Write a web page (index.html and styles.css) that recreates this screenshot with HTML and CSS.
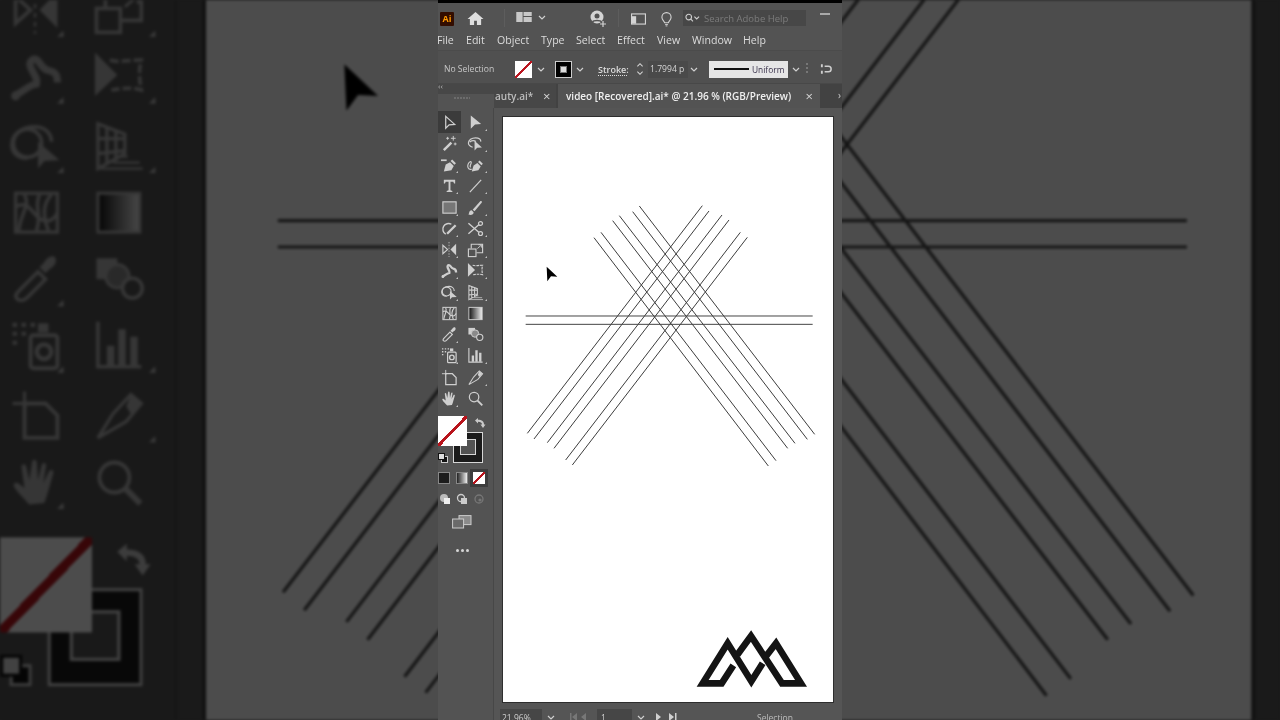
FILE: index.html
```html
<!DOCTYPE html>
<html lang="en">
<head>
<meta charset="utf-8">
<title>Illustrator</title>
<link rel="stylesheet" href="styles.css">
</head>
<body>
<svg class="sprite" aria-hidden="true">
  <defs>
    <linearGradient id="grad"><stop offset="0" stop-color="#111"/><stop offset="1" stop-color="#eee"/></linearGradient>
    <symbol id="sel" viewBox="0 0 18 18"><path d="M5 2.500V15l3.600-3.600 5.900-.4z" fill="none" stroke="currentColor" stroke-width="1.300"/></symbol>
    <symbol id="direct" viewBox="0 0 18 18"><path d="M4 1.500v14l4.500-4.500 6.500-.5z" fill="currentColor"/></symbol>
    <symbol id="wand" viewBox="0 0 18 18"><path d="M3 16l8-8" stroke="currentColor" stroke-width="2.600" fill="none"/><path d="M13 1v5M10.500 3.500h5M7 2v3M5.500 3.500h3M15 8v3M13.500 9.500h3" stroke="currentColor" fill="none"/></symbol>
    <symbol id="lasso" viewBox="0 0 18 18"><path d="M6 13C3 12 1.500 10.500 1.500 8.500 1.500 5.500 5 3 9 3s6 2 5.500 4M3 7.500c2-1.500 5-1.500 6.500-.5" fill="none" stroke="currentColor" stroke-width="1.300"/><path d="M8 6v10.500l2.800-3 5-.3z" fill="currentColor"/></symbol>
    <symbol id="pen" viewBox="0 0 18 18"><path d="M3 16.500l2-7.500 4.500-2.500 4 4-2.500 4.500z" fill="currentColor"/><path d="M11 4.500l4 4" stroke="currentColor" stroke-width="2.400"/><path d="M0 4.500h6" stroke="currentColor" stroke-width="1.800"/></symbol>
    <symbol id="curv" viewBox="0 0 18 18"><path d="M5 16.500l2-6.500 4-2.500 3.500 3.500-2.500 4z" fill="currentColor"/><path d="M12.500 5.500l3.500 3.500" stroke="currentColor" stroke-width="2.200"/><path d="M5 14C1 15 0 11 1.500 8c1-2 3-3 3-1S2 11 4 12" fill="none" stroke="currentColor" stroke-width="1.200"/></symbol>
    <symbol id="type" viewBox="0 0 18 18"><path d="M3 3h12v4h-1.200l-.8-2h-3v9l2 .7V16H6v-1.300l2-.7V5H5L4.200 7H3z" fill="currentColor"/></symbol>
    <symbol id="line" viewBox="0 0 18 18"><path d="M3 16L15 3" stroke="currentColor" stroke-width="1.300"/></symbol>
    <symbol id="rect" viewBox="0 0 18 18"><rect x="2" y="3" width="14" height="12" fill="#767676" stroke="currentColor" stroke-width="1.200"/></symbol>
    <symbol id="brush" viewBox="0 0 18 18"><path d="M1.500 16.500c1-1 .5-4.500 3.500-4.500l2 2c0 2.500-2.500 3.500-5.500 2.500z" fill="currentColor"/><path d="M6 11.500L14 2.500c1-1 2.500 0 1.500 1.500L8 13z" fill="currentColor"/></symbol>
    <symbol id="shaper" viewBox="0 0 18 18"><path d="M11 4.500A5.800 5.800 0 1 0 5 15" fill="none" stroke="currentColor" stroke-width="1.500"/><path d="M6.500 14.500L15.500 5.500" stroke="currentColor" stroke-width="2.400"/></symbol>
    <symbol id="scissors" viewBox="0 0 18 18"><path d="M1.500 3.500L12.500 13M1.500 14.500L12.500 5" stroke="currentColor" stroke-width="1.500" fill="none"/><circle cx="14.300" cy="3.700" r="2.100" fill="none" stroke="currentColor" stroke-width="1.300"/><circle cx="14.300" cy="14.300" r="2.100" fill="none" stroke="currentColor" stroke-width="1.300"/></symbol>
    <symbol id="reflect" viewBox="0 0 18 18"><path d="M2 4.500v9l5-4.500z" fill="none" stroke="currentColor" stroke-width="1.200"/><path d="M16 3v12l-6-6z" fill="currentColor"/><path d="M8.500 1v16" stroke="currentColor" stroke-dasharray="1.500 1.500" stroke-width=".8"/></symbol>
    <symbol id="scale" viewBox="0 0 18 18"><rect x="1.500" y="8.500" width="8" height="8" fill="none" stroke="currentColor" stroke-width="1.200"/><path d="M4.500 8V3.500h12v9H10" fill="none" stroke="currentColor" stroke-width="1.200"/><path d="M11 8l4-3.500M12 4h3.500v3" stroke="currentColor" fill="none"/></symbol>
    <symbol id="warp" viewBox="0 0 18 18"><path d="M1.500 15.500C5 14 6 12 9 11.500 10 9 5 5.500 7.500 3.500 10 2 10 6.500 13 7c3 .5 3 2.500 3 4" fill="none" stroke="currentColor" stroke-width="2.400"/><circle cx="2" cy="15.500" r="1.500" fill="currentColor"/></symbol>
    <symbol id="free" viewBox="0 0 18 18"><path d="M1 1v14.500l7.500-7z" fill="currentColor"/><path d="M6 3.500c3 1 5 0 10.500 0-.8 3-.8 6 0 10-4-1-6-.5-10 0" fill="none" stroke="currentColor" stroke-width="1.200" stroke-dasharray="3 1"/></symbol>
    <symbol id="builder" viewBox="0 0 18 18"><circle cx="6" cy="8" r="4.700" fill="none" stroke="currentColor" stroke-width="1.200"/><path d="M6 13C2 13 .5 10.500.8 8 1 5 4 2.500 8.500 2.500c3 0 5.500 2 5.500 5" fill="none" stroke="currentColor" stroke-width="1.200"/><path d="M9.500 7.500v9l2.200-2.500 5-.3z" fill="currentColor"/></symbol>
    <symbol id="persp" viewBox="0 0 18 18"><path d="M2 1.500L11 5v6.500L2 16.500zM5 2.500v12.500M8 4v10M2 6.500h9M2 11.500l9-1" fill="none" stroke="currentColor" stroke-width="1.100"/><path d="M9 12.500h3M7 14.500h9M3 16.500h14" stroke="currentColor" stroke-width=".8"/></symbol>
    <symbol id="mesh" viewBox="0 0 18 18"><rect x="2" y="2.500" width="14" height="13" fill="none" stroke="currentColor" stroke-width="1.100"/><path d="M2 7c4-2 5 1 7 3s5 3 7-1M5 3c2 4-1 5-2 12M10 3C8 7 11 9 9 15M14 3c-3 3-3 7-1 12" fill="none" stroke="currentColor" stroke-width="1.200"/></symbol>
    <symbol id="gradtool" viewBox="0 0 18 18"><rect x="2" y="2.500" width="14" height="13" fill="url(#grad)" stroke="currentColor"/></symbol>
    <symbol id="dropper" viewBox="0 0 18 18"><path d="M2.500 15.500c-1-1 0-2 1-3l6-6 2.500 2.500-6 6c-1 1-2.500 1.500-3.500.5z" fill="none" stroke="currentColor" stroke-width="1.200"/><path d="M10 5l1.500-1.500c1-2 3-2.500 3.500-2 1 1 .5 3-1.500 4L12 7z" fill="currentColor"/></symbol>
    <symbol id="blend" viewBox="0 0 18 18"><rect x="1.500" y="2" width="7" height="7" fill="currentColor"/><circle cx="8.500" cy="8" r="3.900" fill="#8a8a8a" stroke="currentColor"/><circle cx="13.500" cy="12" r="3.300" fill="#535353" stroke="currentColor" stroke-width="1.200"/></symbol>
    <symbol id="spray" viewBox="0 0 18 18"><path d="M1 2h1.500M4 2h1.500M7 2h1.500M1 5h1.500M4 5h1.500M1 8h1.500" stroke="currentColor" stroke-width="1.400"/><rect x="9.500" y="1.500" width="3.500" height="3" fill="currentColor"/><rect x="7" y="5.500" width="9" height="11" rx="1" fill="none" stroke="currentColor" stroke-width="1.300"/><circle cx="11.500" cy="11" r="2.400" fill="none" stroke="currentColor" stroke-width="1.500"/></symbol>
    <symbol id="graph" viewBox="0 0 18 18"><path d="M2 1v15h14.500" fill="none" stroke="currentColor" stroke-width="1.200"/><path d="M5 9h2.500v6.500H5zM8.800 3.500h2.500v12H8.800zM12.800 6h2.500v9.500h-2.500z" fill="currentColor"/></symbol>
    <symbol id="artboard" viewBox="0 0 18 18"><path d="M5 1v5M1 5h5" stroke="currentColor"/><path d="M5 5h7l4 4v7.500H5z" fill="none" stroke="currentColor" stroke-width="1.300"/></symbol>
    <symbol id="slice" viewBox="0 0 18 18"><path d="M2 16.500L7 8.500l6-6.500 3.500 3-5 6z" fill="none" stroke="currentColor" stroke-width="1.100"/><path d="M11.500 6l1.500-4 3.500 3-3.500 3.500z" fill="currentColor"/></symbol>
    <symbol id="hand" viewBox="0 0 18 18"><path d="M6.500 16.500c-1.500-2-4-4-5-6-.5-1 .8-1.800 1.700-.8L5 11 4 4c0-1.200 1.400-1.200 1.600 0l1 4.500L7.500 2.500c0-1.200 1.500-1.200 1.600 0l.4 6 1.200-5c.3-1.200 1.700-1 1.500.2l-1 5.800 2-4c.5-1 1.800-.5 1.400.6-1 3.400-1.800 6.900-3 9.900z" fill="currentColor"/></symbol>
    <symbol id="zoomtool" viewBox="0 0 18 18"><circle cx="7.500" cy="7.500" r="5" fill="none" stroke="currentColor" stroke-width="1.300"/><path d="M11.200 11.200l5 5" stroke="currentColor" stroke-width="2"/></symbol>
    <symbol id="artwork" viewBox="0 0 330 585">
      <g transform="translate(17 83) scale(.33333)" fill="none" stroke="#3c3c3c" stroke-width="3">
        <path d="M358 18L884 703M338 35L862 718M298 47L825 730M278 62L803 745M243 97L768 782M222 113L745 798"/>
        <path d="M547 17L22 700M567 33L42 717M606 45L82 728M627 60L102 745M661 97L137 780M682 112L157 795"/>
        <path d="M17 348H878M17 373H878" stroke="#444"/>
        <path d="M80 200L112 230L93 229L82 244z" fill="#000" stroke="none"/>
      </g>
      <g transform="translate(177 503) scale(.33333)" fill="none" stroke="#141414" stroke-width="20">
        <path d="M160 136L125 190H68L143 70 214 184 248 130"/>
        <path d="M172 104L213 48 306 190H363L288 70 254 114"/>
      </g>
    </symbol>
  </defs>
</svg>

<div class="backdrop" aria-hidden="true">
  <div class="stage">
    <div class="workspace">
      <div class="toolbox">
        <div class="tools">
          <span class="tool on"><svg><use href="#sel"/></svg></span><span class="tool more"><svg><use href="#direct"/></svg></span>
          <span class="tool"><svg><use href="#wand"/></svg></span><span class="tool more"><svg><use href="#lasso"/></svg></span>
          <span class="tool more"><svg><use href="#pen"/></svg></span><span class="tool more"><svg><use href="#curv"/></svg></span>
          <span class="tool more"><svg><use href="#type"/></svg></span><span class="tool more"><svg><use href="#line"/></svg></span>
          <span class="tool more"><svg><use href="#rect"/></svg></span><span class="tool more"><svg><use href="#brush"/></svg></span>
          <span class="tool more"><svg><use href="#shaper"/></svg></span><span class="tool more"><svg><use href="#scissors"/></svg></span>
          <span class="tool more"><svg><use href="#reflect"/></svg></span><span class="tool more"><svg><use href="#scale"/></svg></span>
          <span class="tool more"><svg><use href="#warp"/></svg></span><span class="tool more"><svg><use href="#free"/></svg></span>
          <span class="tool more"><svg><use href="#builder"/></svg></span><span class="tool more"><svg><use href="#persp"/></svg></span>
          <span class="tool"><svg><use href="#mesh"/></svg></span><span class="tool"><svg><use href="#gradtool"/></svg></span>
          <span class="tool more"><svg><use href="#dropper"/></svg></span><span class="tool"><svg><use href="#blend"/></svg></span>
          <span class="tool more"><svg><use href="#spray"/></svg></span><span class="tool more"><svg><use href="#graph"/></svg></span>
          <span class="tool"><svg><use href="#artboard"/></svg></span><span class="tool more"><svg><use href="#slice"/></svg></span>
          <span class="tool more"><svg><use href="#hand"/></svg></span><span class="tool"><svg><use href="#zoomtool"/></svg></span>
        </div>
        <div class="swatches">
          <span class="stroke-big"><span class="stroke-inner"></span></span>
          <span class="fill-big"></span>
          <svg class="swap" viewBox="0 0 12 12"><path d="M1 3.500L4 1v1.800c4 0 6 1.700 6 4.700h1.500L9 11 6.500 7.500H8c0-1.800-1.500-2.700-4-2.700V6.500z" fill="currentColor"/></svg>
          <svg class="defaults" viewBox="0 0 10 10"><rect x="3.500" y="3.500" width="6" height="6" fill="#111" stroke="#ccc"/><rect x=".5" y=".5" width="6" height="6" fill="#ddd" stroke="#111"/></svg>
        </div>
      </div>
      <div class="canvas">
        <div class="artboard"><svg class="art"><use href="#artwork"/></svg></div>
      </div>
    </div>
  </div>
</div>

<div class="app">
  <div class="titlebar">
    <span class="ai-logo">Ai</span>
    <svg class="ic home" viewBox="0 0 18 16"><path d="M9 1L0.500 8.500H3V15h4.500v-4.500h3V15H15V8.500h2.500z" fill="currentColor"/></svg>
    <i class="sep sep-a"></i>
    <svg class="ic layout" viewBox="0 0 17 11"><path d="M0 0h7v11H0zM8 0h9v4.500H8zM8 5.500h9V11H8z" fill="currentColor"/></svg>
    <svg class="chev chev-a" viewBox="0 0 8 5"><path d="M1 1l3 3 3-3" fill="none" stroke="currentColor" stroke-width="1.200"/></svg>
    <svg class="ic user" viewBox="0 0 18 18"><circle cx="8" cy="7" r="6.500" fill="currentColor"/><circle cx="8" cy="6" r="2.500" fill="#535353"/><path d="M3.500 12c1-2 8-2 9 0" stroke="#535353" fill="none" stroke-width="1.500"/><path d="M14 11v6M11 14h6" stroke="currentColor" stroke-width="1.200"/></svg>
    <i class="sep sep-b"></i>
    <svg class="ic panel" viewBox="0 0 16 12"><rect x=".6" y=".6" width="14.800" height="10.800" fill="none" stroke="currentColor" stroke-width="1.200"/><rect x="1" y="3" width="4.500" height="8" fill="currentColor"/></svg>
    <svg class="ic bulb" viewBox="0 0 12 16"><path d="M4 11.500C3 9 1 8.500 1 5.500a5 5 0 0 1 10 0c0 3-2 3.500-3 6z" fill="none" stroke="currentColor" stroke-width="1.200"/><path d="M4.500 13.500h3M5 15h2" stroke="currentColor"/></svg>
    <div class="search">
      <svg class="search-ic" viewBox="0 0 16 10"><circle cx="4" cy="4" r="3" fill="none" stroke="currentColor" stroke-width="1.200"/><path d="M6 6l2.500 2.500M10 3.500l2.500 2.500 2.500-2.500" fill="none" stroke="currentColor" stroke-width="1.200"/></svg>
      <span>Search Adobe Help</span>
    </div>
    <i class="minimize"></i>
  </div>

  <nav class="menubar">
    <span>File</span><span>Edit</span><span>Object</span><span>Type</span><span>Select</span><span>Effect</span><span>View</span><span>Window</span><span>Help</span>
  </nav>

  <div class="controlbar">
    <span class="no-sel">No Selection</span>
    <span class="ctl-fill"></span>
    <svg class="chev chev-b" viewBox="0 0 8 5"><path d="M1 1l3 3 3-3" fill="none" stroke="currentColor" stroke-width="1.200"/></svg>
    <span class="ctl-stroke"><i></i></span>
    <svg class="chev chev-c" viewBox="0 0 8 5"><path d="M1 1l3 3 3-3" fill="none" stroke="currentColor" stroke-width="1.200"/></svg>
    <span class="stroke-label">Stroke:</span>
    <svg class="stepper" viewBox="0 0 8 16"><path d="M1 5l3-3 3 3M1 11l3 3 3-3" fill="none" stroke="currentColor" stroke-width="1.200"/></svg>
    <span class="stroke-val">1.7994 p</span>
    <svg class="chev chev-d" viewBox="0 0 8 5"><path d="M1 1l3 3 3-3" fill="none" stroke="currentColor" stroke-width="1.200"/></svg>
    <span class="uniform"><i></i><b>Uniform</b></span>
    <svg class="chev chev-e" viewBox="0 0 8 5"><path d="M1 1l3 3 3-3" fill="none" stroke="currentColor" stroke-width="1.200"/></svg>
    <i class="grip"></i>
    <svg class="ic align" viewBox="0 0 14 12"><path d="M1 1h2v3H1zM1 8h2v3H1z" fill="currentColor"/><path d="M5 3h4a3 3 0 0 1 0 6H5" fill="none" stroke="currentColor" stroke-width="1.600"/></svg>
  </div>

  <div class="tabrow">
    <div class="panel-head"><span class="collapse">‹‹</span><i class="grab"></i></div>
    <div class="tab tab-off"><span class="tab-clip">auty.ai*</span><span class="x">×</span></div>
    <div class="tab tab-on"><span>video [Recovered].ai* @ 21.96 % (RGB/Preview)</span><span class="x">×</span></div>
    <div class="tab-rest">›</div>
  </div>

  <div class="workspace">
    <div class="toolbox">
      <div class="tools">
        <span class="tool on"><svg><use href="#sel"/></svg></span><span class="tool more"><svg><use href="#direct"/></svg></span>
        <span class="tool"><svg><use href="#wand"/></svg></span><span class="tool more"><svg><use href="#lasso"/></svg></span>
        <span class="tool more"><svg><use href="#pen"/></svg></span><span class="tool more"><svg><use href="#curv"/></svg></span>
        <span class="tool more"><svg><use href="#type"/></svg></span><span class="tool more"><svg><use href="#line"/></svg></span>
        <span class="tool more"><svg><use href="#rect"/></svg></span><span class="tool more"><svg><use href="#brush"/></svg></span>
        <span class="tool more"><svg><use href="#shaper"/></svg></span><span class="tool more"><svg><use href="#scissors"/></svg></span>
        <span class="tool more"><svg><use href="#reflect"/></svg></span><span class="tool more"><svg><use href="#scale"/></svg></span>
        <span class="tool more"><svg><use href="#warp"/></svg></span><span class="tool more"><svg><use href="#free"/></svg></span>
        <span class="tool more"><svg><use href="#builder"/></svg></span><span class="tool more"><svg><use href="#persp"/></svg></span>
        <span class="tool"><svg><use href="#mesh"/></svg></span><span class="tool"><svg><use href="#gradtool"/></svg></span>
        <span class="tool more"><svg><use href="#dropper"/></svg></span><span class="tool"><svg><use href="#blend"/></svg></span>
        <span class="tool more"><svg><use href="#spray"/></svg></span><span class="tool more"><svg><use href="#graph"/></svg></span>
        <span class="tool"><svg><use href="#artboard"/></svg></span><span class="tool more"><svg><use href="#slice"/></svg></span>
        <span class="tool more"><svg><use href="#hand"/></svg></span><span class="tool"><svg><use href="#zoomtool"/></svg></span>
      </div>
      <div class="swatches">
        <span class="stroke-big"><span class="stroke-inner"></span></span>
        <span class="fill-big"></span>
        <svg class="swap" viewBox="0 0 12 12"><path d="M1 3.500L4 1v1.800c4 0 6 1.700 6 4.700h1.500L9 11 6.500 7.500H8c0-1.800-1.500-2.700-4-2.700V6.500z" fill="currentColor"/></svg>
        <svg class="defaults" viewBox="0 0 10 10"><rect x="3.500" y="3.500" width="6" height="6" fill="#111" stroke="#ccc"/><rect x=".5" y=".5" width="6" height="6" fill="#ddd" stroke="#111"/></svg>
      </div>
      <div class="mode-row">
        <span class="mode mode-solid"></span><span class="mode mode-grad"></span><span class="mode-on"><span class="mode mode-none"></span></span>
      </div>
      <div class="draw-row">
        <svg class="draw on" viewBox="0 0 12 12"><circle cx="5" cy="5" r="4" fill="#bbb"/><rect x="5" y="5" width="6" height="6" fill="#eee"/></svg>
        <svg class="draw" viewBox="0 0 12 12"><circle cx="5" cy="5" r="3.500" fill="none" stroke="#ccc" stroke-width="1.300"/><rect x="5" y="5" width="6" height="6" fill="#ccc"/></svg>
        <svg class="draw dim" viewBox="0 0 12 12"><circle cx="6" cy="6" r="4" fill="none" stroke="#777" stroke-width="1.300"/><circle cx="7" cy="7" r="1.600" fill="#777"/></svg>
      </div>
      <svg class="screen" viewBox="0 0 20 14"><rect x="7" y=".6" width="12" height="9" fill="#8a8a8a" stroke="#ccc"/><rect x=".6" y="4" width="11" height="9" fill="#6a6a6a" stroke="#ccc"/></svg>
      <div class="dots"><i></i><i></i><i></i></div>
    </div>
    <div class="canvas">
      <div class="artboard"><svg class="art"><use href="#artwork"/></svg></div>
      <div class="status">
        <span class="zoom-val">21.96%</span>
        <svg class="chev" viewBox="0 0 8 5"><path d="M1 1l3 3 3-3" fill="none" stroke="currentColor" stroke-width="1.200"/></svg>
        <svg class="nav dim" viewBox="0 0 20 8"><path d="M1 0v8h1.500V0zM8 0L3 4l5 4zM17 0l-5 4 5 4z" fill="currentColor"/></svg>
        <span class="page-val">1</span>
        <svg class="chev" viewBox="0 0 8 5"><path d="M1 1l3 3 3-3" fill="none" stroke="currentColor" stroke-width="1.200"/></svg>
        <svg class="nav" viewBox="0 0 24 8"><path d="M2 0l5 4-5 4zM15 0l5 4-5 4zM21 0v8h1.500V0z" fill="currentColor"/></svg>
        <span class="status-label">Selection</span>
      </div>
    </div>
  </div>
</div>
</body>
</html>
```

FILE: styles.css
```css
* { box-sizing: border-box; }
html, body { margin: 0; height: 100%; }
body {
  position: relative;
  width: 1280px;
  height: 720px;
  overflow: hidden;
  background: #1a1a1a;
  font-family: "Open Sans", "Liberation Sans", sans-serif;
  color: #d6d6d6;
}
i { display: block; font-style: normal; }
.sprite { position: absolute; width: 0; height: 0; }

/* blurred, dimmed enlargement behind the video column */
.backdrop {
  position: absolute;
  inset: 0;
  overflow: hidden;
  filter: blur(1.800px) brightness(.3);
}
.stage {
  position: absolute;
  left: 438px;
  top: 0;
  width: 404px;
  height: 720px;
  display: flex;
  flex-direction: column;
  padding-top: 108px;
  background: #555;
  transform: scale(3.168);
  transform-origin: 50% 50%;
}
.stage .tool { color: #b4b4b4; }

/* foreground column */
.app {
  position: relative;
  width: 404px;
  height: 720px;
  margin: 0 auto;
  display: flex;
  flex-direction: column;
  overflow: hidden;
  background: #535353;
  filter: blur(.35px);
}

.titlebar {
  height: 31px;
  flex: none;
  border-top: 3px solid #000;
  display: flex;
  align-items: center;
  padding: 2px 0 0 2px;
  background: #535353;
}
.ai-logo {
  width: 14px;
  height: 14px;
  margin-top: 2px;
  background: #330d00;
  color: #ff9a00;
  font-size: 9px;
  font-weight: 700;
  line-height: 14px;
  text-align: center;
  border-radius: 1px;
}
.ic { flex: none; color: #d4d4d4; }
.home { width: 17px; height: 15px; margin-left: 13px; color: #dedede; }
.sep { width: 1px; height: 18px; background: #5d5d5d; flex: none; }
.sep-a { margin-left: 20px; }
.layout { width: 16px; height: 10px; margin-left: 11px; color: #c8c8c8; margin-top: -2px; }
.chev { width: 8px; height: 5px; flex: none; color: #d0d0d0; }
.chev-a { margin-left: 6px; margin-top: -2px; }
.user { width: 18px; height: 18px; margin-left: 43px; margin-top: 2px; }
.sep-b { margin-left: 11px; }
.panel { width: 15px; height: 12px; margin-left: 12px; margin-top: 2px; }
.bulb { width: 11px; height: 15px; margin-left: 15px; margin-top: 2px; }
.search {
  width: 123px;
  height: 16px;
  margin-left: 11px;
  background: #474747;
  display: flex;
  align-items: center;
  padding-left: 2px;
  font-size: 9.500px;
  color: #7c7c7c;
  white-space: nowrap;
}
.search-ic { width: 15px; height: 10px; color: #cfcfcf; margin-right: 4px; flex: none; }
.minimize { width: 10px; height: 2px; background: #a8a8a8; margin: -8px 0 0 14px; }

.menubar {
  height: 19px;
  flex: none;
  display: flex;
  align-items: center;
  padding-bottom: 2px;
  font-size: 10.600px;
  color: #dcdcdc;
  white-space: nowrap;
  background: #535353;
}
.menubar span { flex: none; }
.menubar span:nth-child(1) { margin-left: -1px; width: 29px; }
.menubar span:nth-child(2) { width: 31px; }
.menubar span:nth-child(3) { width: 44px; }
.menubar span:nth-child(4) { width: 35px; }
.menubar span:nth-child(5) { width: 41px; }
.menubar span:nth-child(6) { width: 40px; }
.menubar span:nth-child(7) { width: 35px; }
.menubar span:nth-child(8) { width: 51px; }

.controlbar {
  height: 34px;
  flex: none;
  display: flex;
  align-items: center;
  padding: 4px 0 0 6px;
  background: #505050;
  font-size: 8.600px;
  white-space: nowrap;
  border-top: 1px solid #4b4b4b;
  border-bottom: 1px solid #484848;
}
.no-sel { width: 71px; color: #c8c8c8; flex: none; }
.ctl-fill {
  width: 17px;
  height: 17px;
  flex: none;
  background: linear-gradient(to bottom right, #fff calc(50% - 1.200px), #bb1620 calc(50% - 1.200px), #bb1620 calc(50% + 1.200px), #fff calc(50% + 1.200px));
}
.chev-b { margin-left: 5px; }
.ctl-stroke {
  width: 17px;
  height: 17px;
  margin-left: 10px;
  flex: none;
  background: #000;
  border: 1px solid #ccc;
  display: flex;
  align-items: center;
  justify-content: center;
}
.ctl-stroke i { width: 7px; height: 7px; background: #ddd; border: 1px solid #777; }
.chev-c { margin-left: 4px; }
.stroke-label {
  width: 30px;
  margin-left: 14px;
  flex: none;
  text-decoration: underline dotted;
  text-underline-offset: 2px;
  font-weight: 600;
  font-size: 9px;
  color: #dedede;
}
.stepper { width: 8px; height: 14px; margin-left: 8px; flex: none; }
.stroke-val {
  width: 40px;
  height: 17px;
  margin-left: 4px;
  flex: none;
  background: #4a4a4a;
  line-height: 17px;
  padding-left: 2px;
  color: #d6d6d6;
}
.chev-d { margin-left: 2px; }
.uniform {
  width: 79px;
  height: 17px;
  margin-left: 11px;
  flex: none;
  background: #e6e6e6;
  display: flex;
  align-items: center;
  padding-left: 5px;
}
.uniform i { width: 35px; height: 2px; background: #111; flex: none; }
.uniform b { font-weight: 400; color: #38304a; margin-left: 3px; font-size: 8.400px; }
.chev-e { margin-left: 4px; }
.grip { width: 2px; height: 12px; margin-left: 6px; background: repeating-linear-gradient(#777 0 2px, transparent 2px 4px); }
.align { width: 13px; height: 12px; margin-left: 12px; color: #cfcfcf; }

.tabrow {
  height: 24px;
  flex: none;
  display: flex;
  background: #424242;
  white-space: nowrap;
  font-size: 10px;
}
.panel-head {
  width: 56px;
  flex: none;
  position: relative;
  background: linear-gradient(#474747 0 10px, #535353 10px);
}
.collapse { position: absolute; left: 0; top: -4px; font-size: 8px; color: #bbb; }
.grab { position: absolute; left: 16px; top: 13px; width: 16px; height: 2px; background: repeating-linear-gradient(90deg, #6c6c6c 0 2px, transparent 2px 3px); }
.tab { display: flex; align-items: center; height: 100%; flex: none; overflow: hidden; }
.tab-off { width: 62px; padding-left: 1px; background: #474747; color: #bdbdbd; font-weight: 600; }
.tab-clip { width: 48px; flex: none; }
.tab-on { width: 262px; padding: 0 7px 0 8px; background: #535353; color: #f0f0f0; font-weight: 600; justify-content: space-between; margin-left: 2px; }
.x { font-size: 13px; font-weight: 400; color: #d6d6d6; line-height: 1; }
.tab-rest { flex: 1; text-align: right; padding-right: 1px; line-height: 22px; color: #ccc; }

.workspace { flex: 1; min-height: 0; display: flex; background: #555; }
.toolbox {
  width: 56px;
  flex: none;
  display: flex;
  flex-direction: column;
  background: #535353;
  border-right: 1px solid #474747;
}
.tools {
  display: grid;
  grid-template-columns: 23px 29px;
  grid-auto-rows: 21.250px;
  padding-top: 3.400px;
}
.tool {
  position: relative;
  display: flex;
  align-items: center;
  justify-content: center;
  color: #cfcfcf;
}
.tool svg { width: 17px; height: 17px; }
.tool.on { background: #3b3b3b; }
.more::after {
  content: "";
  position: absolute;
  right: 3px;
  bottom: 2px;
  border: 1.500px solid transparent;
  border-right-color: #c0c0c0;
  border-bottom-color: #c0c0c0;
}
.swatches { position: relative; height: 59px; flex: none; }
.fill-big {
  position: absolute;
  left: 0;
  top: 7px;
  width: 29px;
  height: 30px;
  background: linear-gradient(to bottom right, #fff calc(50% - 1.500px), #b9141c calc(50% - 1.500px), #b9141c calc(50% + 1.500px), #fff calc(50% + 1.500px));
}
.stroke-big {
  position: absolute;
  left: 15px;
  top: 23px;
  width: 30px;
  height: 31px;
  background: #1b1b1b;
  border: 1.500px solid #d6d6d6;
}
.stroke-inner {
  position: absolute;
  left: 6px;
  top: 6px;
  width: 16px;
  height: 16px;
  border: 1.500px solid #d6d6d6;
  background: #535353;
}
.swap { position: absolute; left: 36px; top: 8px; width: 12px; height: 12px; color: #c9c9c9; }
.defaults { position: absolute; left: 0; top: 44px; width: 10px; height: 10px; }

.mode-row { height: 21px; flex: none; display: flex; align-items: center; }
.mode { display: block; width: 12px; height: 12px; flex: none; }
.mode-solid { background: #1c1c1c; border: 1px solid #888; }
.mode-grad { margin-left: 6px; border: 1px solid #888; background: linear-gradient(90deg, #222, #eee); }
.mode-on { display: block; margin-left: 2px; padding: 3px; background: #3d3d3d; flex: none; }
.mode-none { background: linear-gradient(to bottom right, #fff calc(50% - 1.300px), #b9141c calc(50% - 1.300px), #b9141c calc(50% + 1.300px), #fff calc(50% + 1.300px)); }
.draw-row { height: 21px; flex: none; display: flex; align-items: center; gap: 5px; padding-left: 1px; }
.draw { width: 12px; height: 12px; flex: none; }
.screen { width: 20px; height: 14px; margin: 5px 0 0 14px; flex: none; }
.dots { display: flex; gap: 2px; margin: 20px 0 0 18px; }
.dots i { width: 3px; height: 3px; border-radius: 50%; background: #d6d6d6; }

.canvas {
  flex: 1;
  min-width: 0;
  display: flex;
  flex-direction: column;
  padding: 9px 0 0 9px;
  background: #555;
}
.artboard {
  width: 330px;
  height: 585px;
  flex: none;
  position: relative;
  background: #fff;
  box-shadow: 0 0 0 1px #2e2e2e;
}
.art { display: block; width: 330px; height: 585px; }

.status {
  height: 18px;
  flex: none;
  margin: 7px 0 0 -3px;
  display: flex;
  align-items: flex-start;
  font-size: 8.500px;
  white-space: nowrap;
  color: #d0d0d0;
}
.zoom-val { width: 42px; height: 18px; background: #464646; line-height: 18px; padding-left: 2px; flex: none; }
.status > .chev { margin: 6px 0 0 5px; }
.nav { height: 8px; margin-top: 4px; flex: none; }
.nav.dim { width: 20px; margin-left: 14px; color: #777; }
.page-val { width: 35px; height: 18px; background: #464646; line-height: 18px; padding-left: 4px; margin-left: 8px; flex: none; }
.status > .nav:not(.dim) { width: 24px; margin-left: 9px; }
.status-label { margin-left: 79px; color: #bdbdbd; line-height: 18px; }
```
